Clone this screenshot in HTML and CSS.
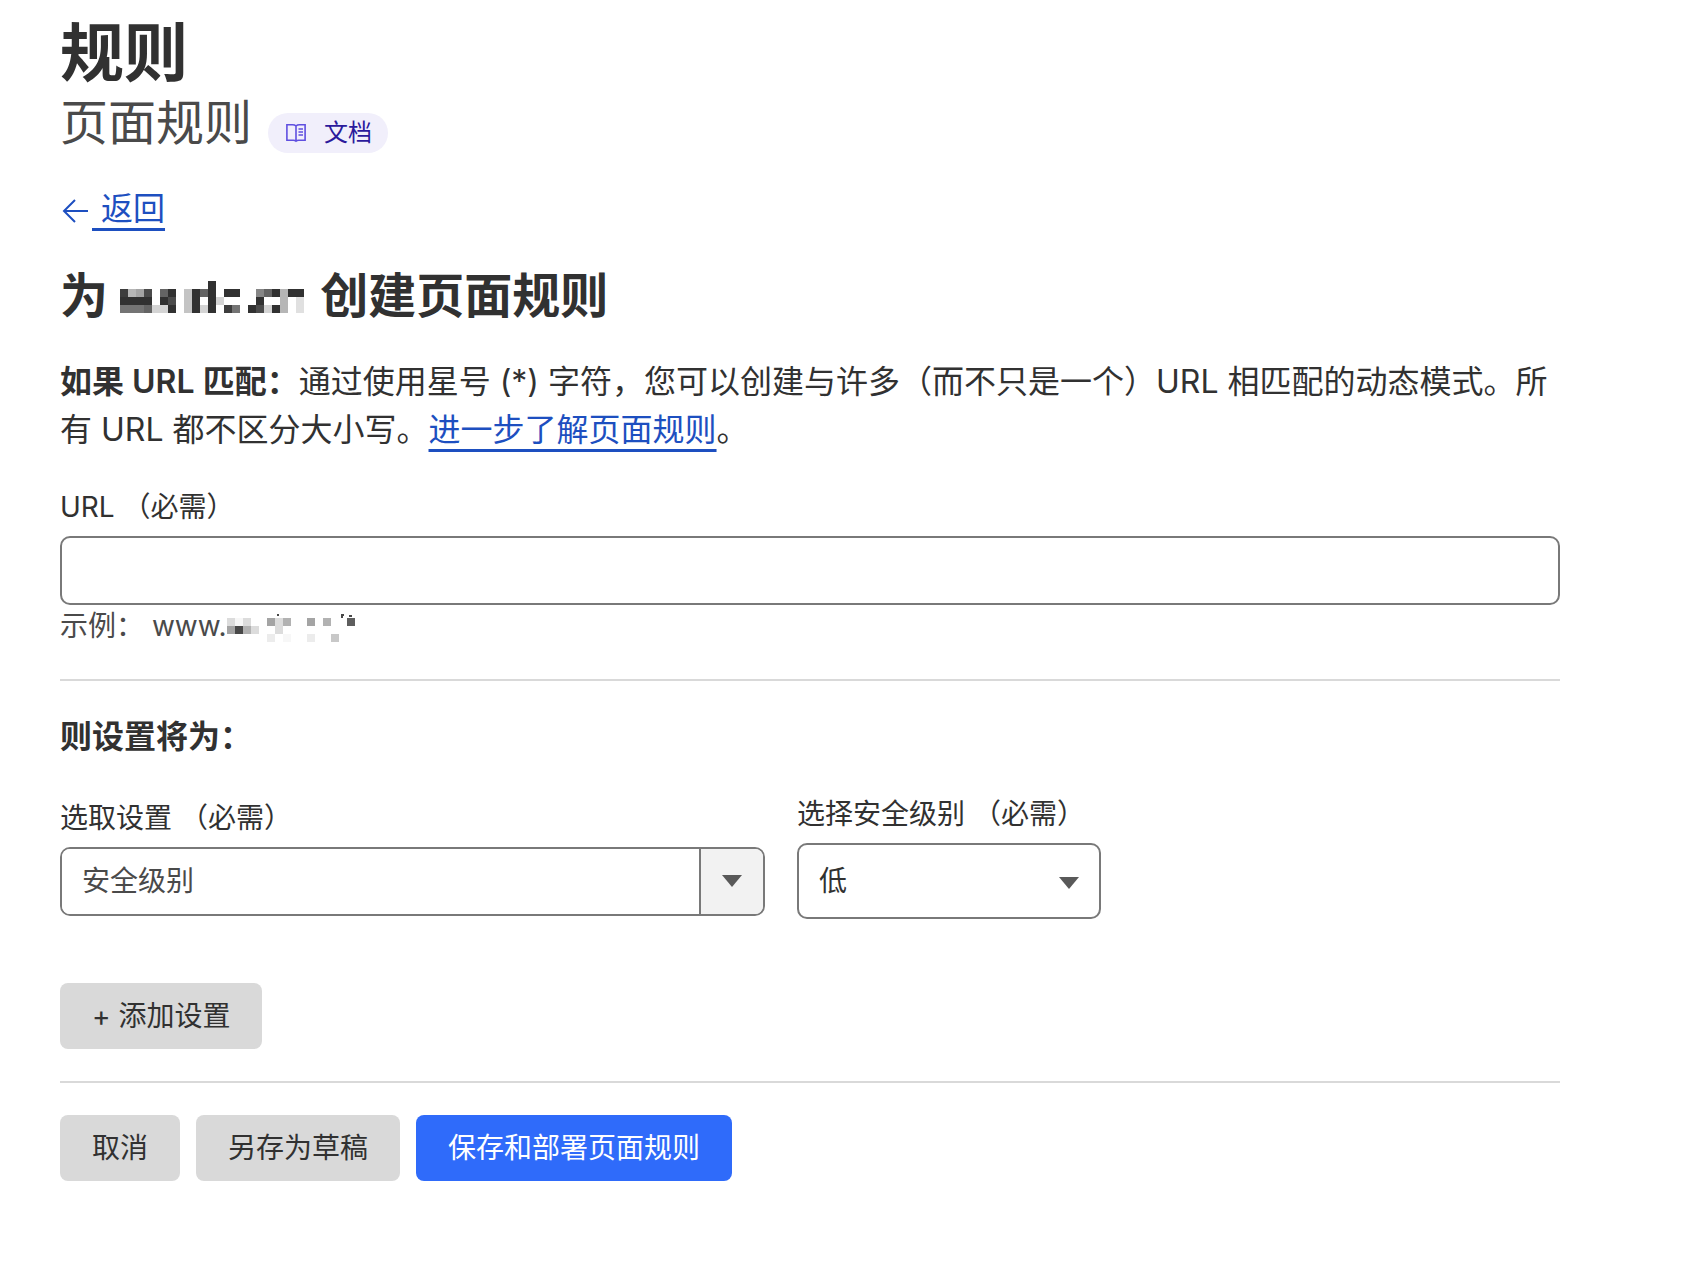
FILE: index.html
```html
<!DOCTYPE html>
<html lang="zh-CN">
<head>
    <meta charset="UTF-8">
    <meta name="viewport" content="width=device-width, initial-scale=1.0">
    <title>页面规则</title>
    <link rel="stylesheet" href="styles.css">
</head>
<body>
    <main class="page">
        <header class="page-header">
            <h1 class="title">规则</h1>
            <div class="subtitle-row">
                <p class="subtitle">页面规则</p>
                <a class="docs-link" href="#">
                    <svg class="docs-icon" viewBox="0 0 20 20" aria-hidden="true">
                        <path d="M10 3C9 2 8 1.800 6.500 1.800H.9v15.400h6.600c1 0 1.500.2 2.500 1 1-.8 1.500-1 2.500-1h6.600V1.800h-5.600C12 1.800 11 2 10 3zM10 3v15.500M12.500 6h4.500M12.500 9h4.500M12.500 12h4.500"/>
                    </svg>
                    <span>文档</span>
                </a>
            </div>
        </header>

        <a class="back-link" href="#"><svg class="back-icon" viewBox="0 0 32 28" aria-hidden="true"><path d="M28 16H4M15 5L4 16l11 11"/></svg><span class="back-text">&nbsp;返回</span></a>

        <form class="rule-form">
            <h2 class="form-title">为
                <svg class="masked-domain" viewBox="0 0 184 32" aria-hidden="true" shape-rendering="crispEdges">
                    <g fill="#313131">
                        <path d="M0 16h32v8H0zM48 8h8v8h-8zM40 16h8v8h-8zM48 24h8v8h-8zM72 8h8v24h-8zM88 0h8v32h-8zM104 8h16v8h-16zM152 8h8v8h-8zM136 16h8v8h-8zM128 24h8v8h-8zM152 24h8v8h-8zM168 8h16v8h-16z"/>
                    </g>
                    <path fill="#3d3d3d" d="M0 8h8v8H0zM104 24h8v8h-8z"/>
                    <path fill="#4b4b4b" d="M24 8h8v8h-8zM48 16h8v8h-8zM136 24h8v8h-8z"/>
                    <path fill="#646464" d="M40 8h8v8h-8zM24 24h8v8h-8zM80 8h8v8h-8zM144 8h8v8h-8z"/>
                    <path fill="#747474" d="M0 24h24v8H0zM112 24h8v8h-8z"/>
                    <path fill="#868686" d="M136 8h8v8h-8z"/>
                    <path fill="#a4a4a4" d="M16 8h8v8h-8z"/>
                    <path fill="#b6b6b6" d="M8 8h8v8H8zM160 8h8v24h-8z"/>
                    <path fill="#c4c4c4" d="M64 8h8v24h-8z"/>
                    <path fill="#d4d4d4" d="M32 24h16v8H32zM80 24h8v8h-8zM96 16h8v8h-8zM144 24h8v8h-8z"/>
                    <path fill="#e0e0e0" d="M176 16h8v16h-8z"/>
                </svg>
                创建页面规则</h2>

            <p class="intro"><strong>如果 URL 匹配：</strong>通过使用星号 (*) 字符，您可以创建与许多（而不只是一个）URL 相匹配的动态模式。所有 URL 都不区分大小写。<a class="text-link" href="#">进一步了解页面规则</a>。</p>

            <div class="field">
                <label class="label" for="url">URL （必需）</label>
                <input class="text-input" type="text" id="url" required>
                <p class="hint">示例： www.<svg class="masked-url" viewBox="3 2 128 32" aria-hidden="true" shape-rendering="crispEdges">
                    <path fill="#484848" d="M11 16h8v8h-8zM53 4h2v2h-2zM117 4h3v2h-1v2h-2zM125 5h3v2h-3z"/>
                    <path fill="#5e5e5e" d="M123 8h8v8h-8z"/>
                    <path fill="#a4a4a4" d="M3 16h8v8H3zM43 8h8v8h-8zM83 8h8v8h-8z"/>
                    <path fill="#b2b2b2" d="M19 16h8v8h-8zM59 8h8v8h-8zM99 8h8v8h-8z"/>
                    <path fill="#c8c8c8" d="M107 24h8v8h-8z"/>
                    <path fill="#dcdcdc" d="M3 8h8v8H3zM19 8h8v8h-8zM27 16h8v8h-8zM51 8h8v16h-8z"/>
                    <path fill="#ececec" d="M43 24h8v8h-8zM83 24h8v8h-8z"/>
                    <path fill="#f7f7f7" d="M11 8h8v8h-8zM59 24h8v8h-8z"/>
                </svg></p>
            </div>

            <hr class="divider">

            <h3 class="section-title">则设置将为：</h3>

            <div class="settings">
                <div class="setting-name">
                    <label class="label" for="setting">选取设置 （必需）</label>
                    <div class="combo">
                        <input class="combo-input" type="text" id="setting" value="安全级别" required>
                        <button class="combo-toggle" type="button" aria-label="展开">
                            <svg class="arrow" viewBox="0 0 20 12" aria-hidden="true"><path d="M0 0h20L10 12z"/></svg>
                        </button>
                    </div>
                </div>
                <div class="setting-value">
                    <label class="label" for="level">选择安全级别 （必需）</label>
                    <div class="select-wrap">
                        <select class="select" id="level" required>
                            <option>低</option>
                        </select>
                        <svg class="arrow select-arrow" viewBox="0 0 20 12" aria-hidden="true"><path d="M0 0h20L10 12z"/></svg>
                    </div>
                </div>
            </div>

            <button class="btn" type="button">+ 添加设置</button>

            <hr class="divider">

            <div class="actions">
                <button class="btn" type="button">取消</button>
                <button class="btn" type="button">另存为草稿</button>
                <button class="btn btn-primary" type="submit">保存和部署页面规则</button>
            </div>
        </form>
    </main>
</body>
</html>
```

FILE: styles.css
```css
* {
    box-sizing: border-box;
}

body {
    margin: 0;
    font-family: Inter, "Noto Sans CJK SC", sans-serif;
    font-size: 28px;
    line-height: 42px;
    color: #313131;
    background: #fff;
}

h1, h2, h3, p {
    margin: 0;
}

input, select, button {
    font: inherit;
    color: inherit;
}

.page {
    padding: 13px 140px 60px 60px;
}

.title {
    font-size: 64px;
    line-height: 80px;
    font-weight: 600;
}

.subtitle-row {
    display: flex;
    align-items: flex-end;
    gap: 16px;
}

.subtitle {
    font-size: 48px;
    line-height: 60px;
    color: #4a4a4a;
}

.docs-link {
    display: flex;
    align-items: center;
    gap: 16px;
    height: 40px;
    padding: 0 16px;
    border-radius: 20px;
    background: #f1effb;
    color: #2b1a9c;
    font-size: 24px;
    text-decoration: none;
}

.docs-icon {
    width: 24px;
    height: 20px;
    fill: none;
    stroke: #5f4fe0;
    stroke-width: 1.6;
}

.back-link {
    display: inline-flex;
    align-items: center;
    margin-top: 32px;
    font-size: 32px;
    line-height: 48px;
    color: #1d4fc0;
    text-decoration: none;
}

.back-icon {
    width: 32px;
    height: 28px;
    fill: none;
    stroke: currentColor;
    stroke-width: 2;
}

.back-text,
.text-link {
    color: #1d4fc0;
    text-decoration: underline;
    text-decoration-thickness: 3px;
    text-underline-offset: 8px;
}

.form-title {
    margin-top: 32px;
    font-size: 48px;
    line-height: 60px;
    font-weight: 600;
}

.masked-domain {
    width: 184px;
    height: 32px;
    margin-right: 4px;
}

.intro {
    margin: 32px 0;
    font-size: 32px;
    line-height: 48px;
}

.intro strong {
    font-weight: 600;
}

.label {
    display: block;
    margin-bottom: 8px;
}

.text-input {
    display: block;
    width: 100%;
    height: 69px;
    padding: 0 20px;
    border: 2px solid #797979;
    border-radius: 10px;
    background: #fff;
}

.hint {
    color: #4a4a4a;
}

.masked-url {
    width: 128px;
    height: 32px;
    vertical-align: middle;
}

.divider {
    height: 2px;
    margin: 32px 0;
    border: 0;
    background: #d9d9d9;
}

.section-title {
    font-size: 32px;
    line-height: 48px;
    font-weight: 600;
}

.settings {
    display: flex;
    align-items: center;
    gap: 32px;
    margin: 32px 0 64px;
}

.setting-name {
    flex: 0 0 47%;
}

.setting-value {
    flex: 0 0 304px;
}

.combo {
    display: flex;
    height: 69px;
    border: 2px solid #797979;
    border-radius: 10px;
    overflow: hidden;
}

.combo-input {
    flex: 1;
    min-width: 0;
    padding: 0 20px;
    border: 0;
    background: #fff;
    color: #4a4a4a;
}

.combo-toggle {
    display: flex;
    align-items: center;
    justify-content: center;
    width: 64px;
    padding: 0;
    border: 0;
    border-left: 2px solid #797979;
    background: #f2f2f2;
}

.arrow {
    width: 20px;
    height: 12px;
    fill: #595959;
}

.select-wrap {
    position: relative;
}

.select {
    display: block;
    width: 100%;
    height: 76px;
    padding: 0 20px;
    border: 2px solid #797979;
    border-radius: 10px;
    background: #fff;
    appearance: none;
}

.select-arrow {
    position: absolute;
    top: 34px;
    right: 22px;
    pointer-events: none;
}

.btn {
    padding: 12px 32px;
    border: 0;
    border-radius: 8px;
    background: #d9d9d9;
    cursor: pointer;
}

.btn-primary {
    background: #2f6bfa;
    color: #fff;
}

.actions {
    display: flex;
    gap: 16px;
}
```
